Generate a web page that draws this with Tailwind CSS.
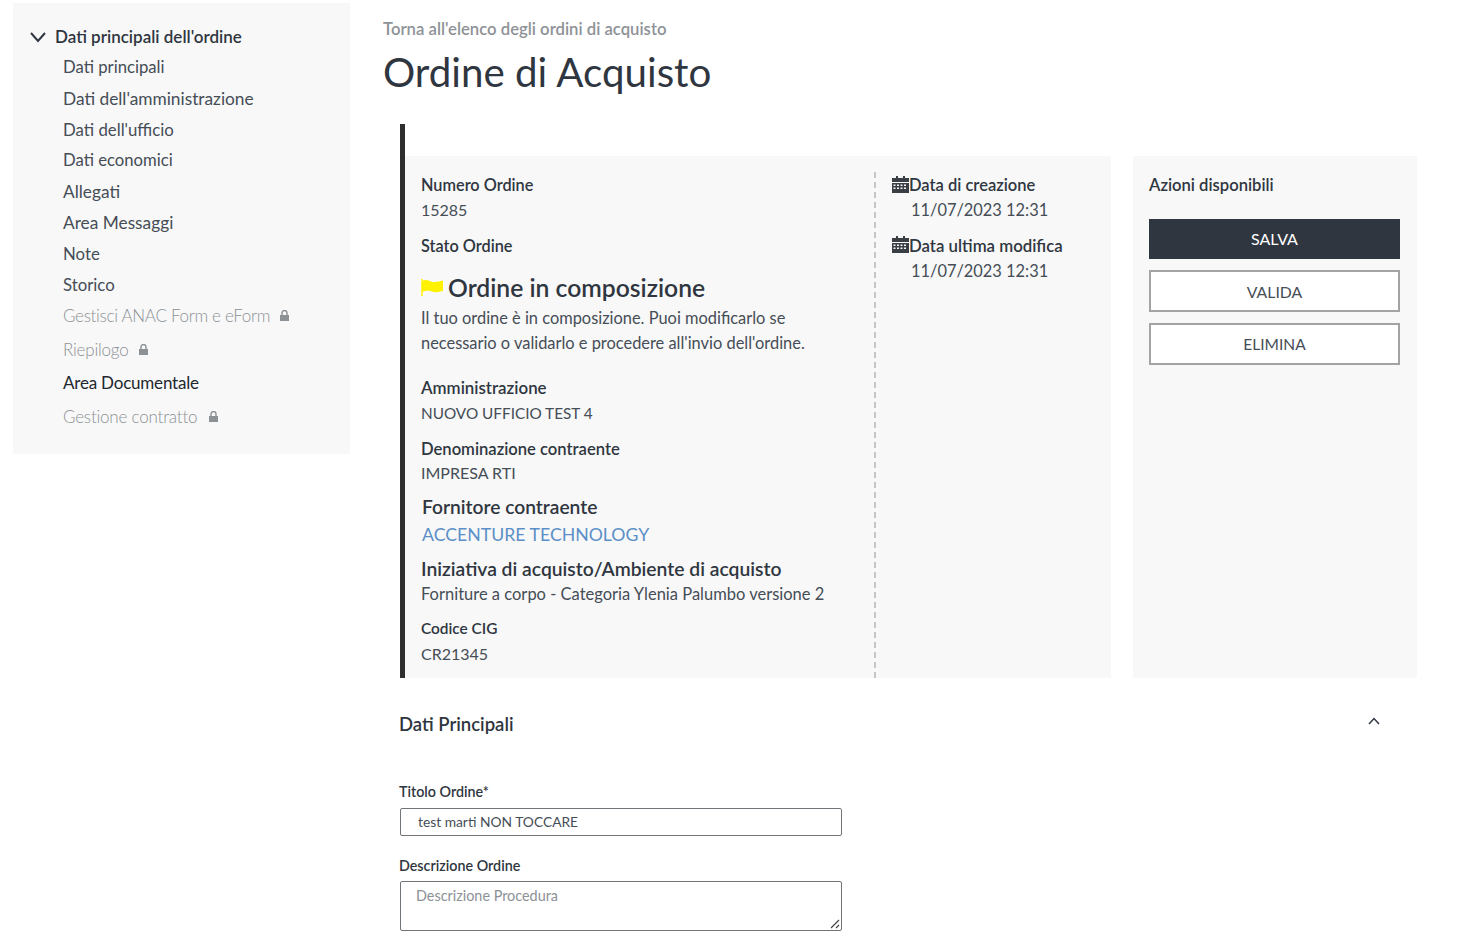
<!DOCTYPE html>
<html lang="it">
<head>
  <meta charset="UTF-8">
  <title>Ordine di Acquisto</title>
  <script src="https://cdn.jsdelivr.net/npm/@tailwindcss/browser@4"></script>
</head>
<body class="bg-white font-['Lato','Open_Sans',sans-serif] text-[#454d56] overflow-hidden">
  <div class="flex h-[933px] w-[1472px] items-start">

    <!-- sidebar -->
    <aside class="ml-[13px] mt-[3px] h-[451px] w-[337px] shrink-0 bg-[#f8f8f8] pt-[18px] text-[17.300px]">
      <div class="flex h-[31px] items-center pl-[17px] text-[17px] font-semibold text-[#2f3640]">
        <svg class="mr-[9px] h-[16px] w-[16px]" viewBox="0 0 16 16" fill="none" stroke="#2f3640" stroke-width="2"><path d="M1 4l7 8 7-8"/></svg>
        Dati principali dell'ordine
      </div>
      <ul class="pl-[50px]">
        <li class="flex h-[31px] items-center pt-[1px] text-[16.700px]">Dati principali</li>
        <li class="flex h-[31px] items-center">Dati dell'amministrazione</li>
        <li class="flex h-[31px] items-center text-[16.800px]">Dati dell'ufficio</li>
        <li class="flex h-[31px] items-center text-[16.700px]">Dati economici</li>
        <li class="flex h-[31px] items-center">Allegati</li>
        <li class="flex h-[31px] items-center">Area Messaggi</li>
        <li class="flex h-[31px] items-center text-[16.800px]">Note</li>
        <li class="flex h-[31px] items-center text-[16.800px]">Storico</li>
        <li class="flex h-[31px] items-center text-[17px] font-light tracking-[-0.3px] text-[#8c9196]">
          Gestisci ANAC Form e eForm
          <svg class="ml-[10px] h-[11px] w-[9px]" viewBox="0 0 9 11" fill="#8c9196"><path d="M0 5h9v6H0z"/><path d="M2 5V3a2.500 2.500 0 0 1 5 0v2" fill="none" stroke="#8c9196" stroke-width="1.400"/></svg>
        </li>
        <li class="mt-[3px] flex h-[31px] items-center text-[17px] font-light tracking-[-0.2px] text-[#8c9196]">
          Riepilogo
          <svg class="ml-[11px] h-[11px] w-[9px]" viewBox="0 0 9 11" fill="#8c9196"><path d="M0 5h9v6H0z"/><path d="M2 5V3a2.500 2.500 0 0 1 5 0v2" fill="none" stroke="#8c9196" stroke-width="1.400"/></svg>
        </li>
        <li class="mt-[2px] flex h-[31px] items-center text-[17px] tracking-[-0.2px] text-[#22272e]">Area Documentale</li>
        <li class="mt-[3px] flex h-[31px] items-center text-[17px] font-light tracking-[-0.2px] text-[#8c9196]">
          Gestione contratto
          <svg class="ml-[12px] h-[11px] w-[9px]" viewBox="0 0 9 11" fill="#8c9196"><path d="M0 5h9v6H0z"/><path d="M2 5V3a2.500 2.500 0 0 1 5 0v2" fill="none" stroke="#8c9196" stroke-width="1.400"/></svg>
        </li>
      </ul>
    </aside>

    <!-- main -->
    <main class="ml-[33px] w-[1040px] shrink-0">
      <div class="mt-[17px] h-[24px] text-[16.700px] font-semibold leading-[24px] text-[#8e9297]">Torna all'elenco degli ordini di acquisto</div>
      <h1 class="mt-[1px] h-[60px] text-[40.300px] font-normal leading-[60px] text-[#2f3640]">Ordine di Acquisto</h1>

      <div class="ml-[17px] mt-[22px] flex h-[554px] items-stretch">
        <div class="flex w-[711px] shrink-0 flex-col border-l-[5px] border-[#2e2e2e] pt-[32px]">
          <div class="flex h-[522px] bg-[#f8f8f8] text-[16px] leading-[25px]">
            <div class="w-[469px] shrink-0 pl-[16px] pt-[16px]">
              <div class="text-[16.300px] font-semibold text-[#2f3640]">Numero Ordine</div>
              <div>15285</div>
              <div class="mt-[10px] h-[25px] text-[16.300px] font-semibold leading-[27px] text-[#2f3640]">Stato Ordine</div>
              <div class="mt-[12px] flex h-[36px] items-center text-[24.700px] font-semibold text-[#2f3640]">
                <svg class="mr-[4px] h-[18px] w-[23px]" viewBox="0 0 23 18"><path d="M1 1v17" stroke="#fff200" stroke-width="1.500"/><path d="M1 3c6-3 8 2 13 1 4 0 6-2 8-1v10c-3 0-5 2-9 1-5-1-7-2-12 0z" fill="#fff200"/></svg>
                Ordine in composizione
              </div>
              <div class="text-[16.400px]">Il tuo ordine è in composizione. Puoi modificarlo se</div>
              <div class="text-[16.400px]">necessario o validarlo e procedere all'invio dell'ordine.</div>
              <div class="mt-[20px] text-[16.900px] font-semibold text-[#2f3640]">Amministrazione</div>
              <div class="h-[25px] text-[15.300px] leading-[27px]">NUOVO UFFICIO TEST 4</div>
              <div class="mt-[11px] h-[25px] text-[16.600px] font-semibold leading-[27px] text-[#2f3640]">Denominazione contraente</div>
              <div class="h-[25px] leading-[23px]">IMPRESA RTI</div>
              <div class="ml-[1px] mt-[8px] text-[19.200px] font-semibold text-[#2f3640]">Fornitore contraente</div>
              <div class="ml-[1px] h-[30px] text-[17.700px] leading-[32px] text-[#5b8fc7]">ACCENTURE TECHNOLOGY</div>
              <div class="mt-[7px] text-[19.300px] font-semibold text-[#2f3640]">Iniziativa di acquisto/Ambiente di acquisto</div>
              <div class="h-[25px] text-[16.500px] leading-[27px]">Forniture a corpo - Categoria Ylenia Palumbo versione 2</div>
              <div class="mt-[10px] h-[25px] text-[15.400px] font-semibold leading-[25px] text-[#2f3640]">Codice CIG</div>
              <div>CR21345</div>
            </div>
            <div class="mt-[16px] border-l-2 border-dashed border-[#c4c6c8] pl-[16px]">
              <div class="flex h-[25px] items-center pt-[2px] text-[16.500px] font-semibold text-[#2f3640]">
                <svg class="mb-[2px] h-[17px] w-[17px]" viewBox="0 0 17 17" fill="#3a3f45"><path d="M0 2h4V0h2v2h5V0h2v2h4v4H0z"/><path fill-rule="evenodd" d="M0 7h17v10H0zM1.500 8.500v1.500h2V8.500zm3.500 0v1.500h2V8.500zm3.500 0v1.500h2V8.500zm3.500 0v1.500h2V8.500zM1.500 11.500v1.500h2v-1.500zm3.500 0v1.500h2v-1.500zm3.500 0v1.500h2v-1.500zm3.500 0v1.500h2v-1.500z"/></svg>
                Data di creazione
              </div>
              <div class="h-[25px] pl-[19px] text-[16.400px] leading-[26px]">11/07/2023 12:31</div>
              <div class="mt-[10px] flex h-[25px] items-center pt-[1px] text-[16.800px] font-semibold text-[#2f3640]">
                <svg class="mb-[1px] h-[17px] w-[17px]" viewBox="0 0 17 17" fill="#3a3f45"><path d="M0 2h4V0h2v2h5V0h2v2h4v4H0z"/><path fill-rule="evenodd" d="M0 7h17v10H0zM1.500 8.500v1.500h2V8.500zm3.500 0v1.500h2V8.500zm3.500 0v1.500h2V8.500zm3.500 0v1.500h2V8.500zM1.500 11.500v1.500h2v-1.500zm3.500 0v1.500h2v-1.500zm3.500 0v1.500h2v-1.500zm3.500 0v1.500h2v-1.500z"/></svg>
                Data ultima modifica
              </div>
              <div class="h-[25px] pl-[19px] text-[16.400px] leading-[27px]">11/07/2023 12:31</div>
            </div>
          </div>
        </div>

        <div class="ml-[22px] mt-[32px] w-[284px] shrink-0 bg-[#f8f8f8] px-[16px] pt-[17px] text-[16px] leading-[25px]">
          <div class="text-[16.600px] font-semibold text-[#2f3640]">Azioni disponibili</div>
          <button class="mt-[21px] block h-[40px] w-[251px] bg-[#2f363f] pb-[2px] text-white">SALVA</button>
          <button class="mt-[11px] block h-[42px] w-[251px] border-2 border-[#a3a3a3] bg-white text-[15.800px]">VALIDA</button>
          <button class="mt-[11px] block h-[42px] w-[251px] border-2 border-[#a3a3a3] bg-white text-[15.500px]">ELIMINA</button>
        </div>
      </div>

      <div class="ml-[16px] mt-[31px] flex h-[30px] w-[981px] items-center justify-between">
        <span class="pt-[2px] text-[18.500px] font-semibold text-[#2f3640]">Dati Principali</span>
        <svg class="mb-[7px] h-[8px] w-[12px]" viewBox="0 0 12 8" fill="none" stroke="#2f3640" stroke-width="1.500"><path d="M1 7l5-5.500L11 7"/></svg>
      </div>

      <form class="ml-[16px] mt-[41px] w-[443px]">
        <label class="block h-[22px] text-[14.300px] font-semibold leading-[24px] text-[#2f3640]">Titolo Ordine*</label>
        <input class="ml-[1px] mt-[6px] block h-[28px] w-[442px] rounded-[2px] border border-[#70757a] pb-[2px] pl-[17px] pr-[17px] text-[13.800px]" value="test marti NON TOCCARE">
        <label class="mt-[18px] block h-[22px] text-[14.300px] font-semibold leading-[23px] text-[#2f3640]">Descrizione Ordine</label>
        <div class="relative ml-[1px] mt-[5px] h-[50px] w-[442px]">
          <textarea class="block h-[50px] w-[442px] resize-none rounded-[2px] border border-[#70757a] px-[15px] pb-[2px] pt-[3px] text-[14.400px] placeholder:text-[#8c9196]" placeholder="Descrizione Procedura"></textarea>
          <svg class="absolute bottom-[2px] right-[2px] h-[10px] w-[10px]" viewBox="0 0 10 10" fill="none" stroke="#444" stroke-width="1.200"><path d="M1 9l8-8M6 9l3-3"/></svg>
        </div>
      </form>
    </main>
  </div>
</body>
</html>
